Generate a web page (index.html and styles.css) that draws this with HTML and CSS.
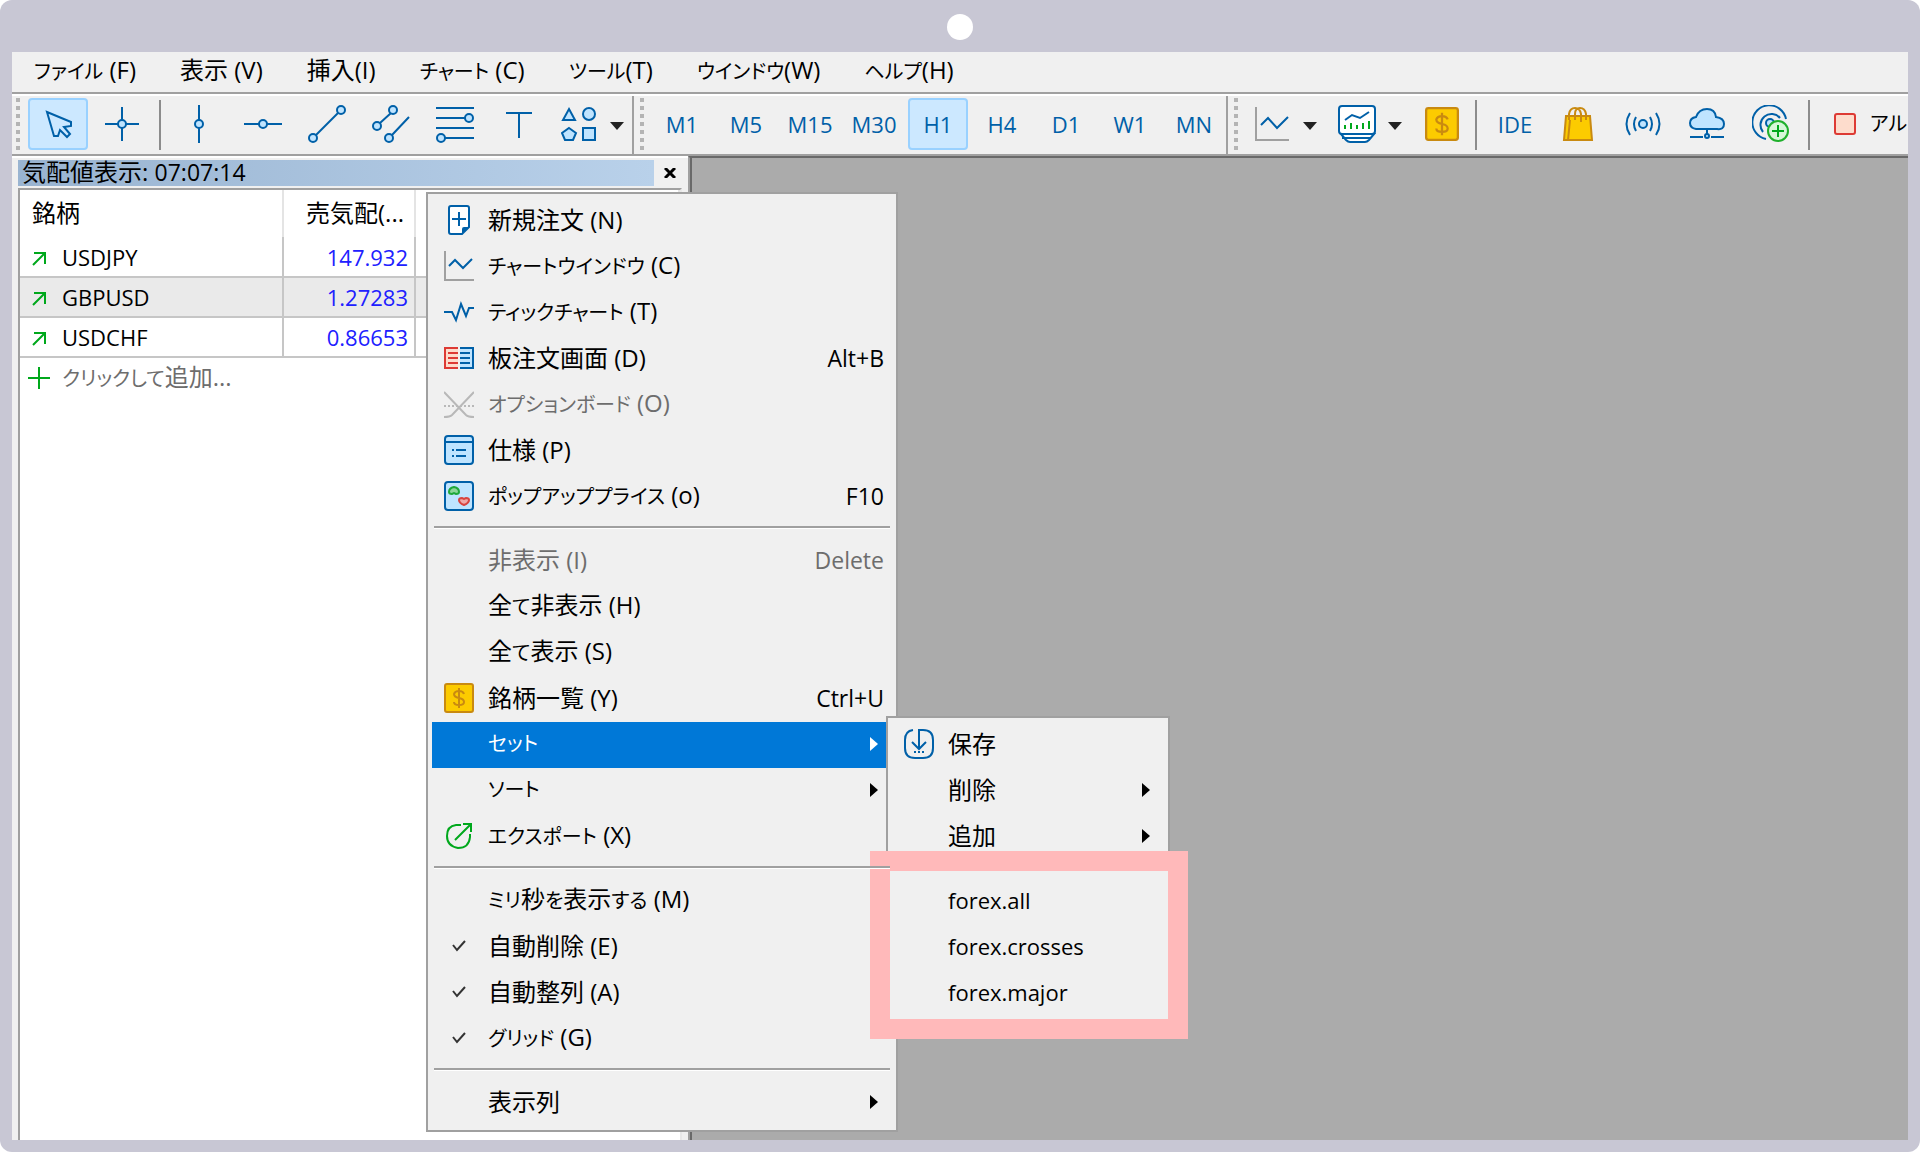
FILE: index.html
```html
<!DOCTYPE html>
<html lang="ja">
<head>
<meta charset="utf-8">
<meta name="viewport" content="width=device-width, initial-scale=1">
<title>気配値表示</title>
<link rel="stylesheet" href="styles.css">
</head>
<body>
<div class="frame">
  <span class="camera"></span>
  <div class="app">
    <nav class="menubar">
      <button type="button"><span class="kana">ファイル</span> (F)</button>
      <button type="button">表示 (V)</button>
      <button type="button">挿入(I)</button>
      <button type="button"><span class="kana">チャート</span> (C)</button>
      <button type="button"><span class="kana">ツール</span>(T)</button>
      <button type="button"><span class="kana">ウインドウ</span>(W)</button>
      <button type="button"><span class="kana">ヘルプ</span>(H)</button>
    </nav>

    <div class="toolbars">
      <div class="toolbar">
        <span class="grip"></span>
        <button type="button" class="tool active" aria-label="カーソル"><svg width="32" height="32" viewBox="0 0 32 32"><path class="ln" d="M5 4 29 14V18L22 19 28 26 25 29 18 22 16 28H12Z"/></svg></button>
        <button type="button" class="tool" aria-label="クロスヘア"><svg width="36" height="36" viewBox="0 0 36 36"><path class="ln" d="M18 1V14M18 22V35M1 18H14M22 18H35"/><circle class="ln lt" cx="18" cy="18" r="4"/></svg></button>
        <span class="sep"></span>
        <button type="button" class="tool" aria-label="垂直線"><svg width="38" height="38" viewBox="0 0 38 38"><path class="ln" d="M19 0V15M19 23V38"/><circle class="ln lt" cx="19" cy="19" r="4"/></svg></button>
        <button type="button" class="tool" aria-label="水平線"><svg width="38" height="38" viewBox="0 0 38 38"><path class="ln" d="M0 19H15M23 19H38"/><circle class="ln lt" cx="19" cy="19" r="4"/></svg></button>
        <button type="button" class="tool" aria-label="トレンドライン"><svg width="38" height="38" viewBox="0 0 38 38"><path class="ln" d="M8 30 30 8"/><circle class="ln lt" cx="5" cy="33" r="4"/><circle class="ln lt" cx="33" cy="5" r="4"/></svg></button>
        <button type="button" class="tool" aria-label="チャネル"><svg width="38" height="38" viewBox="0 0 38 38"><path class="ln" d="M8 18 19 8M20 30 37 12"/><circle class="ln lt" cx="5" cy="21" r="4"/><circle class="ln lt" cx="21" cy="5" r="4"/><circle class="ln lt" cx="17" cy="33" r="4"/></svg></button>
        <button type="button" class="tool" aria-label="フィボナッチ"><svg width="38" height="38" viewBox="0 0 38 38"><path class="ln" d="M0 3H38M0 13H29M0 23H38M9 33H38"/><circle class="ln lt" cx="33" cy="13" r="4"/><circle class="ln lt" cx="5" cy="33" r="4"/></svg></button>
        <button type="button" class="tool" aria-label="テキスト"><svg width="28" height="28" viewBox="0 0 28 28"><path class="ln" d="M1 3H27M14 3V28"/></svg></button>
        <button type="button" class="tool snug" aria-label="図形"><svg width="36" height="36" viewBox="0 0 36 36"><path class="ln lt" d="M8 3 14 14H2ZM8 22 15 27 12 34H4L1 27ZM22 22H34V34H22Z"/><circle class="ln lt" cx="28" cy="8" r="6"/></svg></button>
        <button type="button" class="drop" aria-label="図形の一覧"></button>
      </div>
      <div class="toolbar frames">
        <span class="grip"></span>
        <button type="button" class="tool">M1</button>
        <button type="button" class="tool">M5</button>
        <button type="button" class="tool">M15</button>
        <button type="button" class="tool">M30</button>
        <button type="button" class="tool active">H1</button>
        <button type="button" class="tool">H4</button>
        <button type="button" class="tool">D1</button>
        <button type="button" class="tool">W1</button>
        <button type="button" class="tool">MN</button>
      </div>
      <div class="toolbar charts">
        <span class="grip"></span>
        <button type="button" class="tool snug" aria-label="ラインチャート"><svg width="34" height="34" viewBox="0 0 34 34"><path class="gy" d="M1 0V33H34"/><path class="ln" d="M6 18 13 11 22 21 33 10"/></svg></button>
        <button type="button" class="drop" aria-label="チャートの種類"></button>
        <button type="button" class="tool snug" aria-label="テンプレート"><svg width="38" height="38" viewBox="0 0 38 38"><rect class="ln wh" x="1" y="1" width="36" height="28" rx="3"/><path class="ln wh" d="M3 29 8 35Q10 37 12 37H27Q29 37 31 35L36 29ZM4 33H34"/><path class="ln" d="M7 15 14 10 22 13 31 7"/><path class="gn" d="M7 20V24M13 18V24M19 20V24M25 18V24M31 16V24"/></svg></button>
        <button type="button" class="drop" aria-label="テンプレートの一覧"></button>
        <button type="button" class="tool snug" aria-label="銘柄"><svg width="34" height="34" viewBox="0 0 30 30"><use href="#coin"/></svg></button>
        <span class="sep"></span>
        <button type="button" class="tool">IDE</button>
        <button type="button" class="tool" aria-label="マーケット"><svg width="34" height="36" viewBox="0 0 34 36"><path d="M4 10H28L30 34H2Z" fill="#fccb00" stroke="#c98a10" stroke-width="2"/><path d="M7 14V8Q8 2 13 2T19 8V16M13 14V8Q13 2 18 2T24 8V14M8 14 6 34" fill="none" stroke="#c98a10" stroke-width="2"/></svg></button>
        <button type="button" class="tool" aria-label="シグナル"><svg width="36" height="24" viewBox="0 0 36 24"><circle class="ln lt" cx="18" cy="12" r="4"/><path class="ln" d="M11 5Q7 12 11 19M5 1Q-2 12 5 23M25 5Q29 12 25 19M31 1Q38 12 31 23"/></svg></button>
        <button type="button" class="tool" aria-label="VPS"><svg width="36" height="32" viewBox="0 0 36 32"><path class="ln lt" d="M7 21Q1 20 1 15T7 9Q10 1 18 1T27 9Q35 10 35 16T28 21Z"/><path class="ln" d="M18 21V26M1 29H14M22 29H35"/><circle class="ln lt" cx="18" cy="28" r="2"/></svg></button>
        <button type="button" class="tool" aria-label="接続"><svg width="38" height="38" viewBox="0 0 38 38"><path class="ln" d="M14 34A17 17 0 1 1 34 14M11 27A11 11 0 1 1 28 13"/><circle class="ln lt" cx="18" cy="18" r="4"/><circle cx="26" cy="26" r="10" fill="#d6f7d8" stroke="#1fb02c" stroke-width="2"/><path class="gn" d="M26 20V32M20 26H32"/></svg></button>
        <span class="sep"></span>
        <button type="button" class="algo"><svg width="22" height="22" viewBox="0 0 22 22"><rect x="1" y="1" width="20" height="20" rx="2" fill="#fddccc" stroke="#dd3a34" stroke-width="2"/></svg><span class="kana">アル</span></button>
      </div>
    </div>

    <div class="work">
      <section class="panel">
        <header class="caption">
          <h1>気配値表示: <span class="clock">07:07:14</span></h1>
          <button type="button" class="close" aria-label="閉じる"><svg width="12" height="10" viewBox="0 0 12 10"><path d="M1 0 11 10M11 0 1 10" stroke="#000" stroke-width="3"/></svg></button>
        </header>
        <div class="list">
          <table class="quotes">
            <thead><tr><th class="symbol">銘柄</th><th class="bid">売気配(...</th><th></th></tr></thead>
            <tbody>
              <tr><td><svg class="up" width="14" height="14" viewBox="0 0 14 14"><use href="#up"/></svg>USDJPY</td><td class="price">147.932</td><td></td></tr>
              <tr class="alt"><td><svg class="up" width="14" height="14" viewBox="0 0 14 14"><use href="#up"/></svg>GBPUSD</td><td class="price">1.27283</td><td></td></tr>
              <tr><td><svg class="up" width="14" height="14" viewBox="0 0 14 14"><use href="#up"/></svg>USDCHF</td><td class="price">0.86653</td><td></td></tr>
            </tbody>
          </table>
          <button type="button" class="add"><svg width="22" height="22" viewBox="0 0 22 22"><path class="gn" d="M11 0V22M0 11H22"/></svg><span><span class="kana">クリックして</span>追加...</span></button>
        </div>
      </section>
      <main class="desk"></main>

      <ul class="menu context">
        <li><button type="button"><svg viewBox="0 0 30 30"><path class="ln wh" d="M7 1H23Q25 1 25 3V22L18 29H7Q5 29 5 27V3Q5 1 7 1Z"/><path class="ln" d="M15 7V21M8 14H22"/><path d="M18 29V24Q18 22 20 22H25Z" fill="#0060a8"/></svg><span>新規注文 (N)</span></button></li>
        <li><button type="button"><svg viewBox="0 0 30 30"><path class="gy" d="M1 0V29H30"/><path class="ln" d="M5 15 11 9 19 17 28 8"/></svg><span><span class="kana">チャートウインドウ</span> (C)</span></button></li>
        <li><button type="button"><svg viewBox="0 0 30 30"><path class="ln" d="M0 15H8L12 23 17 7 22 19 25 11H30"/></svg><span><span class="kana">ティックチャート</span> (T)</span></button></li>
        <li><button type="button"><svg viewBox="0 0 30 30"><rect x="1" y="5" width="13" height="20" fill="#fddccc"/><rect x="16" y="5" width="13" height="20" fill="#bfe4ff"/><path d="M14 5H1V25H14M4 10H14M4 15H14M4 20H14" fill="none" stroke="#dd3a34" stroke-width="2"/><path class="ln" d="M16 5H29V25H16M16 10H26M16 15H26M16 20H26"/></svg><span>板注文画面 (D)</span><kbd>Alt+B</kbd></button></li>
        <li><button type="button" disabled><svg viewBox="0 0 30 30"><path class="off" d="M0 3 22 26Q24 28 30 28M30 3 8 26Q6 28 0 28"/><path class="off" stroke-dasharray="2 2" d="M0 17H30"/></svg><span><span class="kana">オプションボード</span> (O)</span></button></li>
        <li><button type="button"><svg viewBox="0 0 30 30"><rect class="ln lt" x="1" y="1" width="28" height="28" rx="3"/><path class="ln" d="M1 7H29M8 15H10M12 15H22M8 21H10M12 21H22"/></svg><span>仕様 (P)</span></button></li>
        <li><button type="button"><svg viewBox="0 0 30 30"><rect class="ln lt" x="1" y="1" width="28" height="28" rx="3"/><path d="M10 6Q15 7 15 11Q15 13 12 13L10 12 8 13Q5 13 5 11Q5 7 10 6Z" fill="#8ed69a" stroke="#1fa83a" stroke-width="2"/><path d="M20 24Q15 22 15 19Q15 17 18 17L20 18 22 17Q25 17 25 19Q25 22 20 24Z" fill="#f0a8a8" stroke="#d8433f" stroke-width="2"/></svg><span><span class="kana">ポップアッププライス</span> (o)</span><kbd>F10</kbd></button></li>
        <li class="rule" role="separator"></li>
        <li><button type="button" disabled><span>非表示 (I)</span><kbd>Delete</kbd></button></li>
        <li><button type="button"><span>全<span class="kana">て</span>非表示 (H)</span></button></li>
        <li><button type="button"><span>全<span class="kana">て</span>表示 (S)</span></button></li>
        <li><button type="button"><svg viewBox="0 0 30 30"><g id="coin"><rect x="1" y="1" width="28" height="28" rx="2" fill="#fccb00" stroke="#c98a10" stroke-width="2"/><path d="M20 11Q19 8 15 8T10 11Q10 14 15 15T20 19Q20 22 15 22T10 19M15 5V25" fill="none" stroke="#c98a10" stroke-width="2"/></g></svg><span>銘柄一覧 (Y)</span><kbd>Ctrl+U</kbd></button></li>
        <li class="open"><button type="button" aria-expanded="true"><span class="kana">セット</span><i class="more"></i></button>
          <ul class="menu sub">
            <li><button type="button"><svg viewBox="0 0 30 30"><path class="ln" d="M9 1Q1 2 1 11V19Q1 29 11 29H19Q29 29 29 19V11Q29 1 19 1H15V19M8 13 15 20 22 13"/><path class="ln" stroke-dasharray="2 2" d="M10 23H20"/></svg><span>保存</span></button></li>
            <li><button type="button"><span>削除</span><i class="more"></i></button></li>
            <li><button type="button"><span>追加</span><i class="more"></i></button></li>
            <li class="rule" role="separator"></li>
            <li><button type="button"><span class="latin">forex.all</span></button></li>
            <li><button type="button"><span class="latin">forex.crosses</span></button></li>
            <li><button type="button"><span class="latin">forex.major</span></button></li>
          </ul>
        </li>
        <li><button type="button"><span class="kana">ソート</span><i class="more"></i></button></li>
        <li><button type="button"><svg viewBox="0 0 30 30"><path class="gn" d="M17 4H12Q3 5 3 15T14 27Q25 27 26 16V13M11 19 26 4M19 3H27V11"/></svg><span><span class="kana">エクスポート</span> (X)</span></button></li>
        <li class="rule" role="separator"></li>
        <li><button type="button"><span><span class="kana">ミリ</span>秒<span class="kana">を</span>表示<span class="kana">する</span> (M)</span></button></li>
        <li><button type="button"><svg viewBox="0 0 30 30"><use href="#tick"/></svg><span>自動削除 (E)</span></button></li>
        <li><button type="button"><svg viewBox="0 0 30 30"><use href="#tick"/></svg><span>自動整列 (A)</span></button></li>
        <li><button type="button"><svg viewBox="0 0 30 30"><path id="tick" d="M9 14 13 19 21 10" fill="none" stroke="#333" stroke-width="2"/></svg><span><span class="kana">グリッド</span> (G)</span></button></li>
        <li class="rule" role="separator"></li>
        <li><button type="button"><span>表示列</span><i class="more"></i></button></li>
      </ul>
    </div>
  </div>
</div>
<svg class="defs" width="0" height="0" aria-hidden="true"><defs><path id="up" d="M1 13 13 1M2 1H13V12" fill="none" stroke="#00a81c" stroke-width="2"/></defs></svg>
</body>
</html>
```

FILE: styles.css
```css
* { box-sizing: border-box; }
body {
  margin: 0;
  background: #fff;
  color: #000;
  font: 24px/32px "Open Sans", "Noto Sans CJK JP", sans-serif;
  font-feature-settings: "palt";
}
button {
  margin: 0;
  padding: 0;
  border: 0;
  background: none;
  color: inherit;
  font: inherit;
  font-feature-settings: inherit;
  text-align: left;
  white-space: nowrap;
}
ul { margin: 0; padding: 0; list-style: none; }
svg { display: block; flex: none; }
.defs { position: absolute; }
.kana { font-size: 20px; }
.latin { font-size: 22px; }

.ln { fill: none; stroke: #0060a8; stroke-width: 2; }
.lt { fill: #bfe4ff; }
.wh { fill: #fff; }
.gy { fill: none; stroke: #a0a0a0; stroke-width: 2; }
.gn { fill: none; stroke: #00a81c; stroke-width: 2; }
.off { fill: none; stroke: #b8b8b8; stroke-width: 2; }

.frame {
  display: flex;
  flex-direction: column;
  min-height: 100vh;
  padding: 0 12px 12px;
  border-radius: 12px;
  background: #c8c7d4;
}
.camera {
  width: 26px;
  height: 26px;
  margin: 14px auto 12px;
  border-radius: 50%;
  background: #fff;
}
.app {
  display: flex;
  flex: 1;
  flex-direction: column;
  overflow: hidden;
  background: #f0f0f0;
}

.menubar {
  display: flex;
  gap: 44px;
  height: 42px;
  padding: 2px 22px 6px;
  border-bottom: 2px solid #a0a0a0;
}

.toolbars {
  display: flex;
  height: 62px;
  border-top: 2px solid #fff;
  border-bottom: 2px solid #a0a0a0;
}
.toolbar {
  display: flex;
  flex: none;
  align-items: flex-start;
  gap: 4px;
  padding: 2px 6px 2px 4px;
  border-right: 2px solid #a0a0a0;
  color: #0060a8;
  font-size: 22px;
}
.toolbar.frames { padding-right: 2px; padding-left: 6px; }
.toolbar.charts { padding-left: 6px; border-right: 0; }
.grip {
  width: 4px;
  height: 52px;
  margin-right: 4px;
  background: repeating-linear-gradient(#b4b4b4 0 4px, transparent 4px 8px);
}
.tool {
  display: flex;
  align-items: center;
  justify-content: center;
  width: 60px;
  height: 52px;
  border: 2px solid transparent;
  border-radius: 4px;
}
.tool.active { border-color: #99d1ff; background: #cce8ff; }
.tool.snug { margin: 0 -4px; }
.sep {
  width: 2px;
  height: 50px;
  margin: 2px 4px 0 3px;
  background: #8c8c8c;
}
.drop {
  width: 14px;
  height: 52px;
  margin: 0 2px 0 1px;
  background: #222;
  clip-path: polygon(0 24px, 100% 24px, 50% 32px);
}
.charts .drop { margin-right: 10px; }
.algo {
  display: flex;
  align-items: center;
  gap: 14px;
  height: 52px;
  margin-left: 16px;
  color: #000;
}

.work { position: relative; display: flex; flex: 1; }
.panel {
  display: flex;
  flex: none;
  flex-direction: column;
  width: 676px;
  padding: 2px 6px 0;
  border-top: 2px solid #fff;
}
.caption { display: flex; align-items: center; height: 26px; }
.caption h1 {
  flex: 1;
  height: 26px;
  margin: 0;
  padding-left: 4px;
  background: linear-gradient(90deg, #99b4d1, #b9d1ea);
  font: inherit;
  line-height: 24px;
}
.clock { font-size: 23px; }
.close { width: 28px; padding-left: 10px; }
.list {
  flex: 1;
  margin-top: 2px;
  border: 2px solid #a0a0a0;
  border-right-color: #e8e8e8;
  border-bottom: 0;
  background: #fff;
}
.quotes { width: 100%; border-collapse: collapse; table-layout: fixed; }
.quotes th {
  height: 47px;
  padding: 0 12px 2px;
  border-right: 2px solid #e4e4e4;
  font-weight: 400;
  text-align: left;
  white-space: nowrap;
}
.quotes .symbol { width: 263px; }
.quotes .bid { width: 132px; padding: 0 0 2px 22px; }
.quotes td {
  height: 40px;
  padding: 0 6px 0 12px;
  border-right: 2px solid #c6c6c6;
  border-bottom: 2px solid #c6c6c6;
  font-size: 22px;
}
.quotes .alt { background: #eaeaea; }
.quotes .price { color: #2020ff; text-align: right; }
.up { display: inline-block; margin-right: 16px; }
.add {
  display: flex;
  align-items: center;
  gap: 12px;
  height: 40px;
  padding-left: 8px;
  color: #6d6d6d;
}
.desk {
  flex: 1;
  border-top: 2px solid #696969;
  border-left: 2px solid #a0a0a0;
  background: #ababab;
  box-shadow: inset 2px 0 #696969;
}

.menu {
  position: absolute;
  padding: 4px;
  border: 2px solid #a0a0a0;
  background: #f0f0f0;
  color: #000;
}
.context { top: 36px; left: 414px; width: 472px; }
.menu li { position: relative; }
.menu button {
  display: grid;
  grid-template-columns: 30px 1fr auto;
  align-items: center;
  column-gap: 14px;
  width: 100%;
  height: 46px;
  padding: 0 8px 2px 12px;
}
.menu button svg { grid-column: 1; width: 30px; height: 30px; }
.menu button > span { grid-column: 2; }
.menu button:disabled { color: #6d6d6d; }
.menu kbd { font: inherit; font-size: 23px; }
.menu .open > button { background: #0078d7; color: #fff; }
.more {
  width: 8px;
  height: 14px;
  margin-right: 6px;
  background: currentColor;
  clip-path: polygon(0 0, 100% 50%, 0 100%);
}
.menu .rule {
  height: 3px;
  margin: 6px 2px 9px;
  border-top: 2px solid #a0a0a0;
  background: #fff;
}
.sub { top: -6px; left: calc(100% - 6px); width: 284px; }
.sub::after {
  content: "";
  position: absolute;
  inset: 133px -20px -19px -18px;
  border: 20px solid #ffb9ba;
  pointer-events: none;
}
```
